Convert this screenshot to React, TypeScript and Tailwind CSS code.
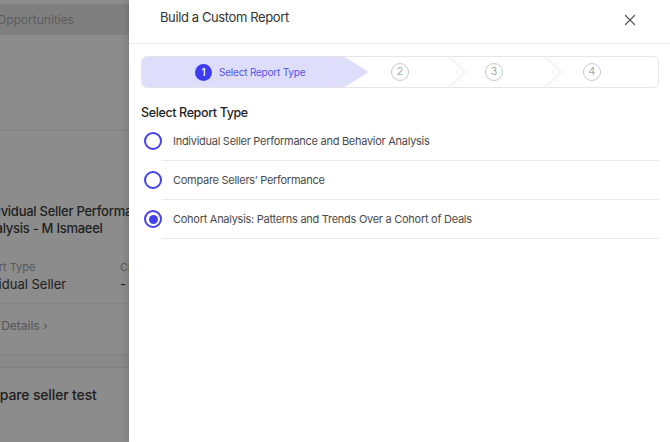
import { X } from "lucide-react";

const reportTypes = [
  { id: "individual", label: "Individual Seller Performance and Behavior Analysis" },
  { id: "compare", label: "Compare Sellers’ Performance" },
  { id: "cohort", label: "Cohort Analysis: Patterns and Trends Over a Cohort of Deals" },
];

export default function App() {
  return (
    <div className="relative h-[442px] w-full overflow-hidden bg-white font-['Inter',sans-serif]">
      <BackgroundPage />
      <div className="absolute inset-0 bg-black/45" />
      <ReportDrawer selected="cohort" />
    </div>
  );
}

function BackgroundPage() {
  return (
    <div className="flex h-full flex-col">
      <div className="mt-[4px] flex h-[31px] items-center bg-[#e8e8e8]">
        <span className="-ml-[3px] text-[12px] text-[#a8a8a8]">Opportunities</span>
      </div>
      <div className="h-[96px] border-b border-[#e9e9e9]" />
      <div className="flex h-[224px] flex-col border-b border-[#ececec]">
        <div className="-ml-[21px] mt-[72px] w-[220px] text-[13px] leading-[17px] font-medium tracking-[-0.02em] text-[#3a3a3a]">
          Individual Seller Performance Analysis - M Ismaeel
        </div>
        <div className="mt-[24px] flex">
          <div className="-ml-[28px] flex w-[148px] flex-col gap-[2px]">
            <span className="text-[11px] leading-[13px] text-[#a3a3a3]">Report Type</span>
            <span className="-ml-[3px] text-[13px] leading-[16px] text-[#3a3a3a]">Individual Seller</span>
          </div>
          <div className="flex flex-col gap-[2px]">
            <span className="text-[11px] leading-[13px] text-[#a3a3a3]">Created</span>
            <span className="text-[13px] leading-[16px] text-[#3a3a3a]">-</span>
          </div>
        </div>
        <div className="mt-[11px] border-t border-[#ededed] pt-[14px]">
          <span className="-ml-[30px] block text-[12px] leading-[16px] text-[#9a9a9a]">View Details ›</span>
        </div>
      </div>
      <div className="h-[13px] border-b border-[#ececec] bg-[#fafafa]" />
      <div className="pt-[14px]">
        <span className="-ml-[31px] text-[14px] font-medium tracking-[-0.01em] text-[#3a3a3a]">Compare seller test</span>
      </div>
    </div>
  );
}

function ReportDrawer({ selected }: { selected: string }) {
  return (
    <div className="absolute inset-y-0 right-0 left-[129px] flex flex-col bg-white shadow-[-2px_0_6px_rgba(0,0,0,0.12)]">
      <div className="flex h-[44px] items-start justify-between border-b border-[#ececec] pr-[31px] pl-[31px] pt-[8px]">
        <h2 className="text-[13px] leading-[18px] tracking-[-0.03em] text-[#333]">Build a Custom Report</h2>
        <X className="mt-[3px] h-[18px] w-[18px] text-[#555]" strokeWidth={1.6} />
      </div>

      <div className="mx-[12px] mt-[12px] mr-[11px]">
        <Stepper />

        <h3 className="mt-[16px] text-[12.5px] leading-[18px] font-medium tracking-[-0.03em] text-[#1f1f1f]">
          Select Report Type
        </h3>

        <div className="flex flex-col">
          {reportTypes.map((item) => (
            <label key={item.id} className="flex h-[39px] cursor-pointer items-stretch">
              <span className="flex items-center pl-[3px] pb-px">
                <span className="flex h-[18px] w-[18px] items-center justify-center rounded-full border-2 border-[#4540ee] bg-white">
                  {item.id === selected && <span className="h-[9px] w-[9px] rounded-full bg-[#4540ee]" />}
                </span>
              </span>
              <span className="flex flex-1 items-center border-b border-[#e8e8e8] pl-[11px] text-[11px] tracking-[-0.025em] text-[#4a4a4a]">
                {item.label}
              </span>
            </label>
          ))}
        </div>
      </div>
    </div>
  );
}

function Stepper() {
  return (
    <div className="flex h-[32px] overflow-hidden rounded-[6px] border border-[#e6e6e6]">
      <div className="flex w-[227px] shrink-0 items-center bg-[#dedefc] pl-[53px] [clip-path:polygon(0_0,calc(100%-24px)_0,100%_50%,calc(100%-24px)_100%,0_100%)]">
        <span className="flex h-[17px] w-[17px] items-center justify-center rounded-full bg-[#3e3cf0] text-[10px] font-medium text-white">
          1
        </span>
        <span className="ml-[7px] text-[10px] tracking-[-0.02em] text-[#5552ec]">Select Report Type</span>
      </div>
      <div className="flex w-[81px] shrink-0 items-center pl-[22px]">
        <StepCircle n={2} />
      </div>
      <Chevron />
      <div className="flex w-[81px] shrink-0 items-center pl-[20px]">
        <StepCircle n={3} />
      </div>
      <Chevron />
      <div className="flex flex-1 items-center pl-[22px]">
        <StepCircle n={4} />
      </div>
    </div>
  );
}

function StepCircle({ n }: { n: number }) {
  return (
    <span className="flex h-[18px] w-[18px] items-center justify-center rounded-full border-[1.5px] border-[#c9c9c9] text-[10.5px] text-[#a5a5a5]">
      {n}
    </span>
  );
}

function Chevron() {
  return (
    <svg className="h-[30px] w-[15px] shrink-0" viewBox="0 0 15 30" fill="none">
      <path d="M0 0L15 15L0 30" stroke="#e6e6e6" strokeWidth="1" />
    </svg>
  );
}
